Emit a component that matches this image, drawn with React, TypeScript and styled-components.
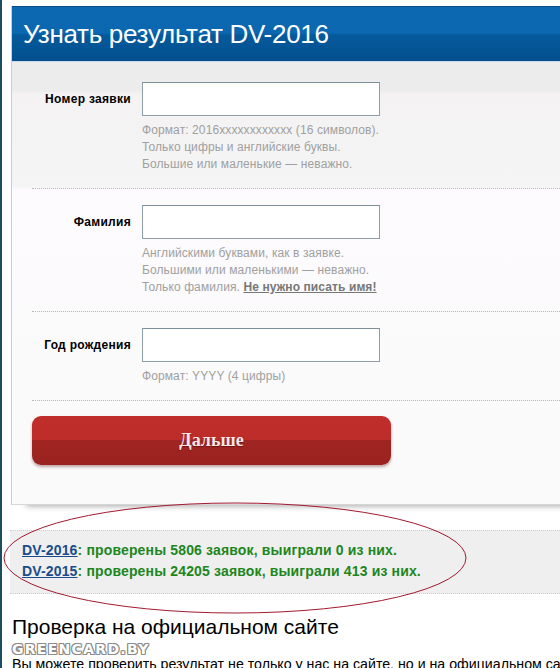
import React from "react";
import styled, { createGlobalStyle } from "styled-components";

const GlobalStyle = createGlobalStyle`
  html, body {
    margin: 0;
    padding: 0;
    background: #fff;
  }
  body {
    font-family: "Liberation Sans", Arial, sans-serif;
    color: #000;
  }
`;

const Page = styled.div`
  position: relative;
  box-sizing: border-box;
  width: 560px;
  height: 668px;
  overflow: hidden;
  border-left: 2px solid #1c4d60;
  padding-top: 6px;
`;

const Panel = styled.section`
  width: 600px;
  margin-left: 9px;
  border-left: 1px solid #cdcdcd;
  border-bottom: 1px solid #d6d6d6;
  background: #fafafa;
  box-shadow: 10px 6px 6px -5px rgba(0, 0, 0, 0.35);
`;

const PanelHeader = styled.header`
  height: 56px;
  display: flex;
  align-items: center;
  padding-left: 11px;
  box-sizing: border-box;
  border-top: 1px solid #0b4e86;
  border-bottom: 1px solid #c9dcee;
  background: linear-gradient(
    #0b68b1 0,
    #0a67b0 48%,
    #055a9c 52%,
    #034f8d 100%
  );
`;

const Title = styled.h1`
  margin: 0;
  font-family: "Liberation Sans", Arial, sans-serif;
  font-weight: normal;
  font-size: 26px;
  color: #fff;
  letter-spacing: -0.3px;
`;

const Form = styled.form`
  margin: 0;
  background: linear-gradient(
    #ececec 0,
    #ececec 28px,
    #f4f2f3 32px,
    #f5f5f5 124px,
    #fdfbfd 128px,
    #fafafa 100%
  );
`;

const Row = styled.div<{ $top: number; $bottom: number }>`
  display: grid;
  grid-template-columns: 119px 238px;
  column-gap: 11px;
  padding: ${(p) => p.$top}px 0 ${(p) => p.$bottom}px;
`;

const Label = styled.label`
  align-self: center;
  text-align: right;
  font-size: 12px;
  font-weight: bold;
  letter-spacing: 0.3px;
  color: #000;
`;

const Input = styled.input`
  box-sizing: border-box;
  width: 238px;
  height: 34px;
  margin: 0;
  border: 1px solid #8d9ea9;
  border-top-color: #7e8e99;
  background: #fff;
  font: inherit;
`;

const Hint = styled.div`
  grid-column: 2;
  margin-top: 6px;
  font-size: 12px;
  line-height: 17px;
  letter-spacing: 0.1px;
  color: #a0a0a0;
  white-space: nowrap;
`;

const HintLink = styled.a`
  color: #777;
  font-weight: bold;
  text-decoration: underline;
`;

const Divider = styled.hr`
  margin: 0 0 0 20px;
  border: 0;
  border-top: 1px dotted #b9b9b9;
  height: 0;
`;

const ButtonRow = styled.div`
  padding: 15px 0 39px 20px;
`;

const SubmitButton = styled.button`
  width: 359px;
  height: 49px;
  border: 0;
  border-radius: 9px;
  background: linear-gradient(#c02e2b 0, #bc2c29 50%, #a02522 50%, #9a2220 100%);
  box-shadow: 0 2px 3px rgba(80, 0, 0, 0.35);
  font-family: "Liberation Serif", "Times New Roman", serif;
  font-weight: bold;
  font-size: 18px;
  color: #f6e6e6;
  text-shadow: 0 1px 1px rgba(60, 0, 0, 0.5);
  cursor: pointer;
`;

const Stats = styled.div`
  margin: 25px 0 0 8px;
  width: 600px;
  padding: 9px 0 11px 12px;
  border-top: 1px dotted #cfcfcf;
  border-bottom: 1px dotted #cfcfcf;
  background: #efefef;
  font-size: 14px;
  font-weight: bold;
  line-height: 21px;
  letter-spacing: 0.15px;
  color: #1d861d;
`;

const StatsLink = styled.a`
  color: #1a4c8c;
  text-decoration: underline;
`;

const Heading = styled.h2`
  margin: 21px 0 0 10px;
  font-family: "Liberation Sans", Arial, sans-serif;
  font-weight: normal;
  font-size: 21px;
  line-height: 24px;
  color: #000;
`;

const Watermark = styled.div`
  margin: 3px 0 0 10px;
  font-family: "DejaVu Sans", Verdana, sans-serif;
  font-weight: 900;
  font-size: 14px;
  line-height: 14px;
  letter-spacing: 1.3px;
  color: #fff;
  text-shadow: 1px 0 0 #8c8c8c, -1px 0 0 #8c8c8c, 0 1px 0 #8c8c8c,
    0 -1px 0 #8c8c8c, 1px 1px 0 #8c8c8c, -1px -1px 0 #8c8c8c,
    1px -1px 0 #8c8c8c, -1px 1px 0 #8c8c8c;
`;

const Paragraph = styled.p`
  margin: 0 0 0 10px;
  font-size: 14.2px;
  line-height: 16px;
  white-space: nowrap;
`;

const Annotation = styled.svg`
  position: absolute;
  left: 0;
  top: 500px;
  pointer-events: none;
`;

const rows = [
  {
    label: "Номер заявки",
    top: 20,
    bottom: 15,
    hints: [
      "Формат: 2016xxxxxxxxxxxx (16 символов).",
      "Только цифры и английские буквы.",
      "Большие или маленькие — неважно.",
    ],
  },
  {
    label: "Фамилия",
    top: 16,
    bottom: 15,
    hints: [
      "Английскими буквами, как в заявке.",
      "Большими или маленькими — неважно.",
      "Только фамилия.",
    ],
  },
  {
    label: "Год рождения",
    top: 16,
    bottom: 15,
    hints: ["Формат: YYYY (4 цифры)"],
  },
];

export default function App() {
  return (
    <>
      <GlobalStyle />
      <Page>
        <Panel>
          <PanelHeader>
            <Title>Узнать результат DV-2016</Title>
          </PanelHeader>
          <Form onSubmit={(e) => e.preventDefault()}>
            {rows.map((row, i) => (
              <React.Fragment key={row.label}>
                <Row $top={row.top} $bottom={row.bottom}>
                  <Label>{row.label}</Label>
                  <Input type="text" />
                  <Hint>
                    {row.hints.map((h, j) => (
                      <div key={j}>
                        {h}
                        {i === 1 && j === 2 && (
                          <>
                            {" "}
                            <HintLink href="#">Не нужно писать имя!</HintLink>
                          </>
                        )}
                      </div>
                    ))}
                  </Hint>
                </Row>
                <Divider />
              </React.Fragment>
            ))}
            <ButtonRow>
              <SubmitButton type="submit">Дальше</SubmitButton>
            </ButtonRow>
          </Form>
        </Panel>

        <Stats>
          <div>
            <StatsLink href="#">DV-2016</StatsLink>: проверены 5806 заявок,
            выиграли 0 из них.
          </div>
          <div>
            <StatsLink href="#">DV-2015</StatsLink>: проверены 24205 заявок,
            выиграли 413 из них.
          </div>
        </Stats>

        <Heading>Проверка на официальном сайте</Heading>
        <Watermark>GREENCARD.BY</Watermark>
        <Paragraph>
          Вы можете проверить результат не только у нас на сайте, но и на
          официальном сайте
        </Paragraph>

        <Annotation width="470" height="118" viewBox="0 0 470 118">
          <ellipse
            cx="233"
            cy="58"
            rx="231"
            ry="55"
            fill="none"
            stroke="#a3192e"
            strokeWidth="1"
          />
        </Annotation>
      </Page>
    </>
  );
}
